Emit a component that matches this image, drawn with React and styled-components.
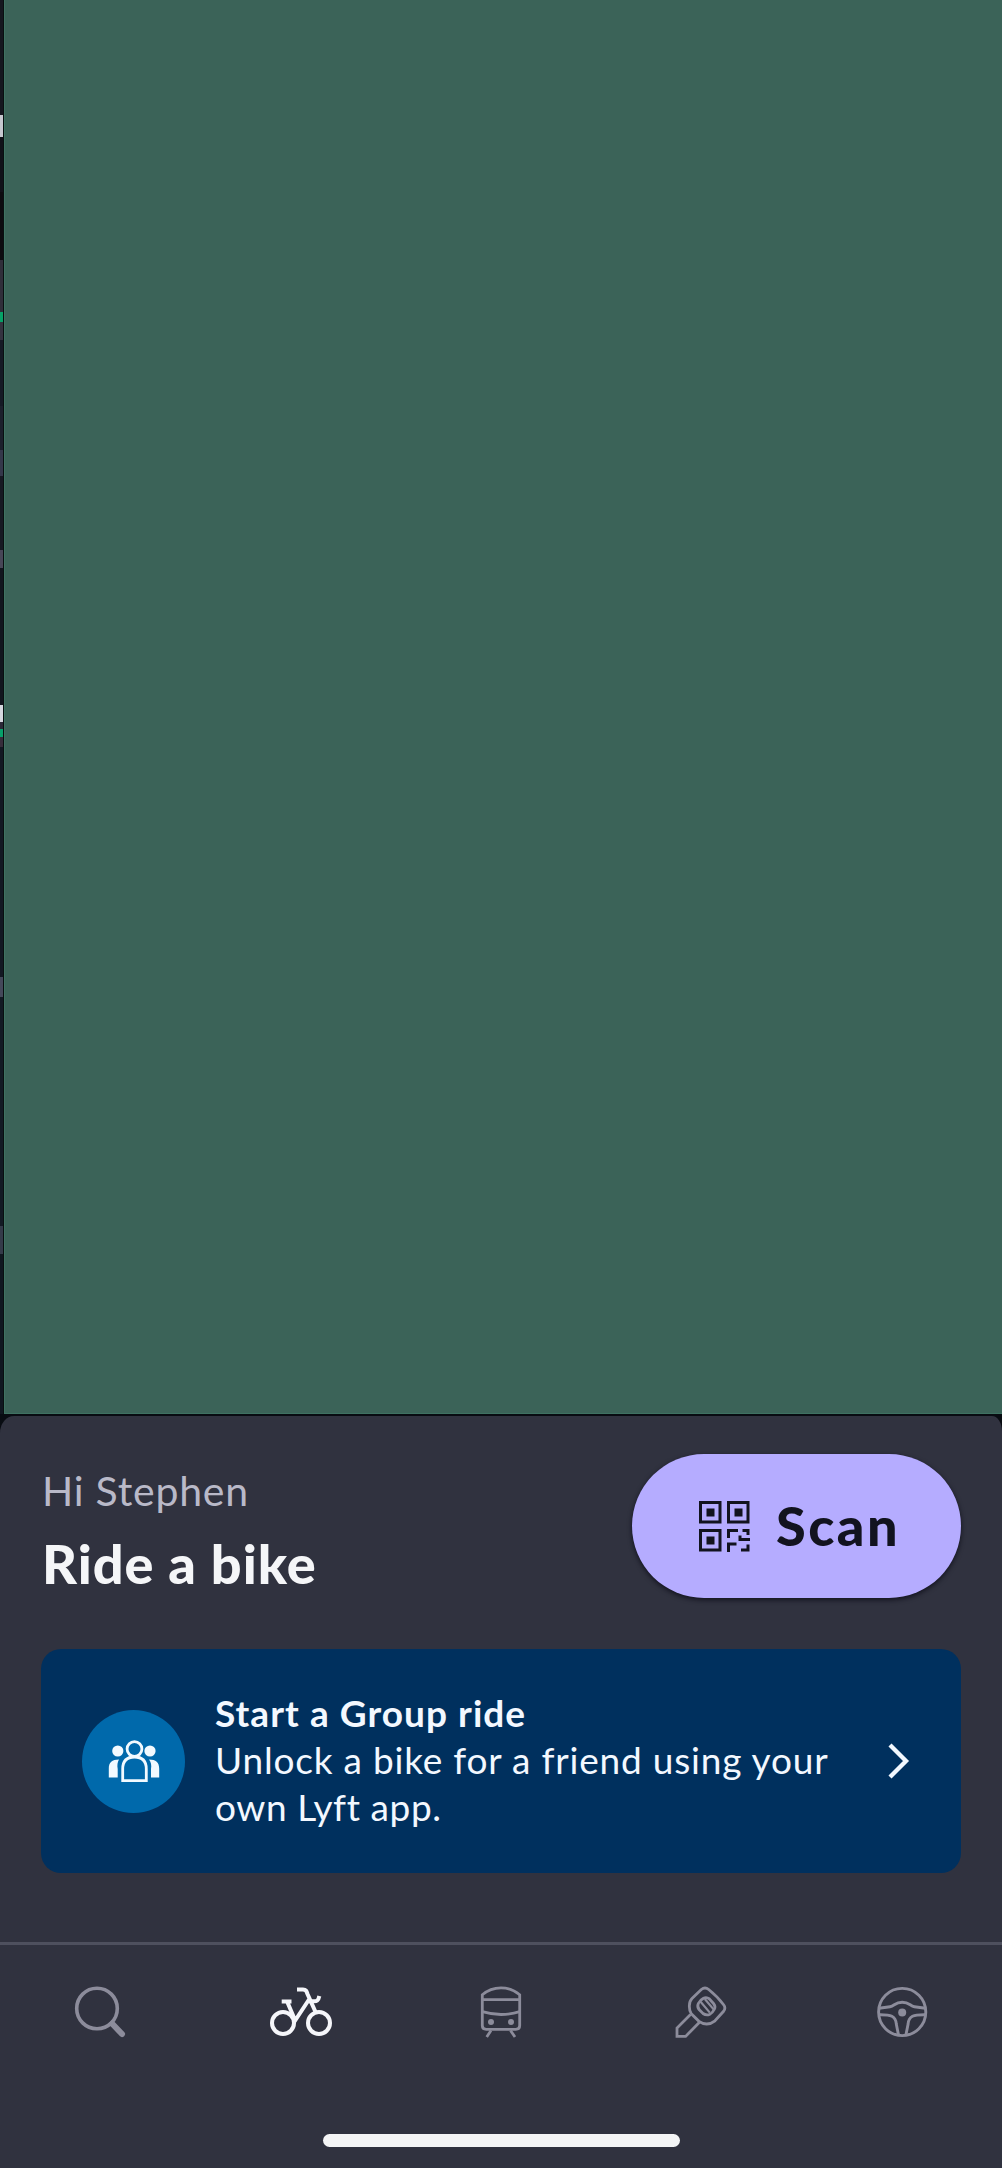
import React from "react";
import styled, { createGlobalStyle } from "styled-components";

const GlobalStyle = createGlobalStyle`
  *, *::before, *::after { box-sizing: border-box; }
  body { margin: 0; background: #30323f; }
  button { font: inherit; border: 0; padding: 0; margin: 0; }
  svg { display: block; flex: none; }
`;

const Screen = styled.main`
  width: 1002px;
  height: 2168px;
  display: flex;
  flex-direction: column;
  overflow: hidden;
  background: #080c12;
  font-family: Lato, "Open Sans", sans-serif;
`;

const MapArea = styled.section`
  height: 1414px;
  flex: none;
  display: flex;
`;

const MapEdge = styled.div`
  width: 4px;
  border-right: 1px solid #080f10;
  display: flex;
  flex-direction: column;
`;

const MapSegment = styled.div`
  height: ${(p) => p.$h}px;
  flex: none;
  background: ${(p) => p.$c};
`;

const Cover = styled.div`
  flex: 1;
  background: #3b6358;
  border-left: 1px solid #3f7262;
  border-bottom: 1px solid #3f7262;
`;

const Sheet = styled.section`
  margin-top: 2px;
  flex: 1;
  display: flex;
  flex-direction: column;
  background: #30323f;
  border-radius: 14px 10px 0 0 / 17px 15px 0 0;
`;

const Header = styled.header`
  display: flex;
  justify-content: space-between;
  padding: 38px 41px 0 42px;
  height: 233px;
`;

const Greeting = styled.div`
  display: flex;
  flex-direction: column;
  padding-top: 11px;
  white-space: nowrap;
`;

const Hello = styled.p`
  margin: 0;
  font-size: 41px;
  line-height: 52px;
  font-weight: 400;
  letter-spacing: 0.75px;
  color: #b9b9c8;
`;

const Title = styled.h1`
  margin: 13px 0 0;
  font-size: 54px;
  line-height: 68px;
  font-weight: 900;
  letter-spacing: 1px;
  color: #f5f6f8;
`;

const ScanButton = styled.button`
  width: 329px;
  height: 144px;
  border-radius: 72px;
  background: #b5acff;
  box-shadow: 0 2px 5px rgba(8, 8, 20, 0.75);
  color: #12131f;
  display: flex;
  align-items: center;
  padding-left: 67px;
  gap: 26px;
`;

const ScanLabel = styled.span`
  font-size: 54px;
  line-height: 68px;
  font-weight: 900;
  letter-spacing: 2.5px;
  color: #12131f;
`;

const GroupCard = styled.article`
  margin: 0 41px;
  height: 224px;
  border-radius: 20px;
  background: #00305e;
  display: flex;
  align-items: center;
  padding: 0 51px 0 41px;
`;

const Badge = styled.div`
  width: 103px;
  height: 103px;
  flex: none;
  border-radius: 50%;
  background: #0069ab;
  display: flex;
  align-items: center;
  justify-content: center;
`;

const CardText = styled.div`
  flex: 1;
  padding-left: 30px;
  padding-bottom: 3px;
  white-space: nowrap;
  color: #f3f8ff;
`;

const CardTitle = styled.h2`
  margin: 0;
  font-size: 37px;
  line-height: 47px;
  font-weight: 700;
  letter-spacing: 1.05px;
`;

const CardBody = styled.p`
  margin: 0;
  font-size: 37px;
  line-height: 47px;
  font-weight: 400;
  letter-spacing: ${(p) => p.$track || 0}px;
`;

const TabBar = styled.nav`
  margin-top: 69px;
  border-top: 3px solid #4e505e;
  height: 192px;
  display: flex;
  align-items: flex-start;
  padding-top: 41px;
`;

const Tab = styled.button`
  flex: 1;
  display: flex;
  justify-content: center;
  background: transparent;
  color: ${(p) => (p.$active ? "#f5f6fa" : "#8c8c9b")};
`;

const HomeIndicator = styled.div`
  width: 357px;
  height: 13px;
  margin: 0 0 21px 323px;
  flex: none;
  border-radius: 7px;
  background: #f4f5f6;
`;

const segments = [
  [115, "#15171f"], [22, "#c6c7cf"], [55, "#111119"], [68, "#0d0b10"], [52, "#302e3a"],
  [10, "#06a267"], [18, "#343340"], [66, "#151a25"], [44, "#1c202c"], [26, "#34374a"],
  [74, "#171923"], [18, "#474657"], [137, "#12151e"], [17, "#d5d7df"], [7, "#2c2938"],
  [8, "#07a06a"], [10, "#362d3b"], [230, "#131823"], [20, "#44485a"], [229, "#131a24"],
  [28, "#343a49"], [160, "#101720"],
];

const QrIcon = () => (
  <svg width="51" height="51" viewBox="0 0 51 51" fill="none" stroke="currentColor" strokeWidth="3">
    <path d="M1.5 1.5H21V21H1.5ZM29.5 1.5H49V21H29.5ZM1.5 29.5H21V49H1.5Z" />
    <path d="M7.5 7.5h8v8h-8zM35.5 7.5h8v8h-8zM7.5 35.5h8v8h-8z" fill="currentColor" stroke="none" />
    <path d="M29.5 37V29.5H39M43.5 29.5H49V34M41 34.5V38.5H51M29.5 51V43H37.5M42 49H49V43.5" />
  </svg>
);

const GroupIcon = () => (
  <svg width="52" height="42" viewBox="0 0 52 42" fill="none" stroke="#f2faff" strokeWidth="2.8">
    <circle cx="26.5" cy="9" r="7.4" />
    <path d="M14.7 40.6V29C14.7 21 18.8 17 26.5 17S38.3 21 38.3 29V40.6Z" />
    <g fill="#f2faff" stroke="none">
      <circle cx="9.8" cy="11" r="5.6" />
      <circle cx="42" cy="11" r="5.6" />
      <path d="M.8 37.5V28.5C.8 22.5 4 19.5 11 19.5C9.5 22 9 25 9.7 29V37.5Z" />
      <path d="M51.2 37.5V28.5C51.2 22.5 48 19.5 41 19.5C43 22 43.7 25 43 29V37.5Z" />
    </g>
  </svg>
);

const ChevronIcon = () => (
  <svg width="22" height="36" viewBox="0 0 22 36" fill="none" stroke="#f2f8ff" strokeWidth="4.3">
    <path d="M2 2L18 18L2 34" />
  </svg>
);

const SearchIcon = () => (
  <svg width="52" height="52" viewBox="0 0 52 52" fill="none" stroke="currentColor">
    <circle cx="23" cy="22.5" r="20.3" strokeWidth="3.6" />
    <path d="M38.5 38L48 48" strokeWidth="6" strokeLinecap="round" />
    <path d="M36 36L39 39" strokeWidth="5" />
  </svg>
);

const BikeIcon = () => (
  <svg width="64" height="52" viewBox="0 0 64 52" fill="none" stroke="currentColor" strokeWidth="4">
    <circle cx="14" cy="37" r="11" />
    <circle cx="50" cy="37" r="11" />
    <path d="M28 3.5H34C37 3.5 37.5 5 38.5 8L47 27" />
    <path d="M40 13.5L24.5 37M12.7 15.4H22.5M18.3 16L26 34" />
    <path d="M40 15.3H45C48.5 15.3 49.5 14 50.3 10" />
  </svg>
);

const TrainIcon = () => (
  <svg width="52" height="52" viewBox="0 0 52 52" fill="none" stroke="currentColor" strokeWidth="2.8">
    <path d="M7.3 8.8C18 -.5 34 -.5 44.7 8.8V39.5Q44.7 43.3 40.8 43.3H11.2Q7.3 43.3 7.3 39.5Z" />
    <path d="M7.3 13.7H44.7M7.3 25.7Q26 31.3 44.7 25.7M16 44.5L11.7 51M35.5 44.5L40 51" />
    <circle cx="16" cy="36" r="3" fill="currentColor" stroke="none" />
    <circle cx="36" cy="36" r="3" fill="currentColor" stroke="none" />
  </svg>
);

const KeyIcon = () => (
  <svg width="52" height="52" viewBox="0 0 52 52" fill="none" stroke="currentColor" strokeWidth="2.8">
    <path d="M14.4 21Q14 15.5 17 12.5L26.3 3.5Q30 .5 33.7 3.5Q43 11 48.8 19Q51 22 48.6 25.3L40 34.8Q32 41 24 35.3L16.3 27.7Q14.4 25.5 14.4 21Z" />
    <path d="M15.5 28.5L2 42V50.4H10.6L24.5 36.2" />
    <path d="M28.5 12.3Q31.5 10.8 34.5 13L38.5 17.5Q41 20.5 39.2 23.5Q37.5 27 34.5 28.5Q31 29.7 28 27.5L24.3 23.8Q21.8 20.8 23.3 17.5Q25 14 28.5 12.3Z" />
    <path d="M25.6 15.8L34.8 26.6M29.8 13L38.6 23.4" strokeWidth="2.2" />
  </svg>
);

const WheelIcon = () => (
  <svg width="52" height="52" viewBox="0 0 52 52" fill="none" stroke="currentColor" strokeWidth="2.9">
    <circle cx="26.2" cy="26" r="23.6" />
    <path d="M3 22.3L14 20.7C18.5 20 19 16.2 26.2 16.2S34 20 38.4 20.7L49.4 22.3" />
    <path d="M3 28.7C15 28.5 19.7 30 20.3 38L22.5 49M49.4 28.7C37.4 28.5 32.7 30 32.1 38L29.9 49" />
    <circle cx="26.2" cy="26.6" r="4" fill="currentColor" stroke="none" />
  </svg>
);

const tabs = [
  ["Search", SearchIcon],
  ["Bikes", BikeIcon, true],
  ["Transit", TrainIcon],
  ["Rentals", KeyIcon],
  ["Drive", WheelIcon],
];

export default function App() {
  return (
    <>
      <GlobalStyle />
      <Screen>
        <MapArea>
          <MapEdge>
            {segments.map(([h, c], i) => (
              <MapSegment key={i} $h={h} $c={c} />
            ))}
          </MapEdge>
          <Cover />
        </MapArea>
        <Sheet>
          <Header>
            <Greeting>
              <Hello>Hi Stephen</Hello>
              <Title>Ride a bike</Title>
            </Greeting>
            <ScanButton>
              <QrIcon />
              <ScanLabel>Scan</ScanLabel>
            </ScanButton>
          </Header>
          <GroupCard>
            <Badge>
              <GroupIcon />
            </Badge>
            <CardText>
              <CardTitle>Start a Group ride</CardTitle>
              <CardBody $track={0.8}>Unlock a bike for a friend using your</CardBody>
              <CardBody $track={0.6}>own Lyft app.</CardBody>
            </CardText>
            <ChevronIcon />
          </GroupCard>
          <TabBar>
            {tabs.map(([name, Icon, active]) => (
              <Tab key={name} $active={active} aria-label={name}>
                <Icon />
              </Tab>
            ))}
          </TabBar>
          <HomeIndicator />
        </Sheet>
      </Screen>
    </>
  );
}
